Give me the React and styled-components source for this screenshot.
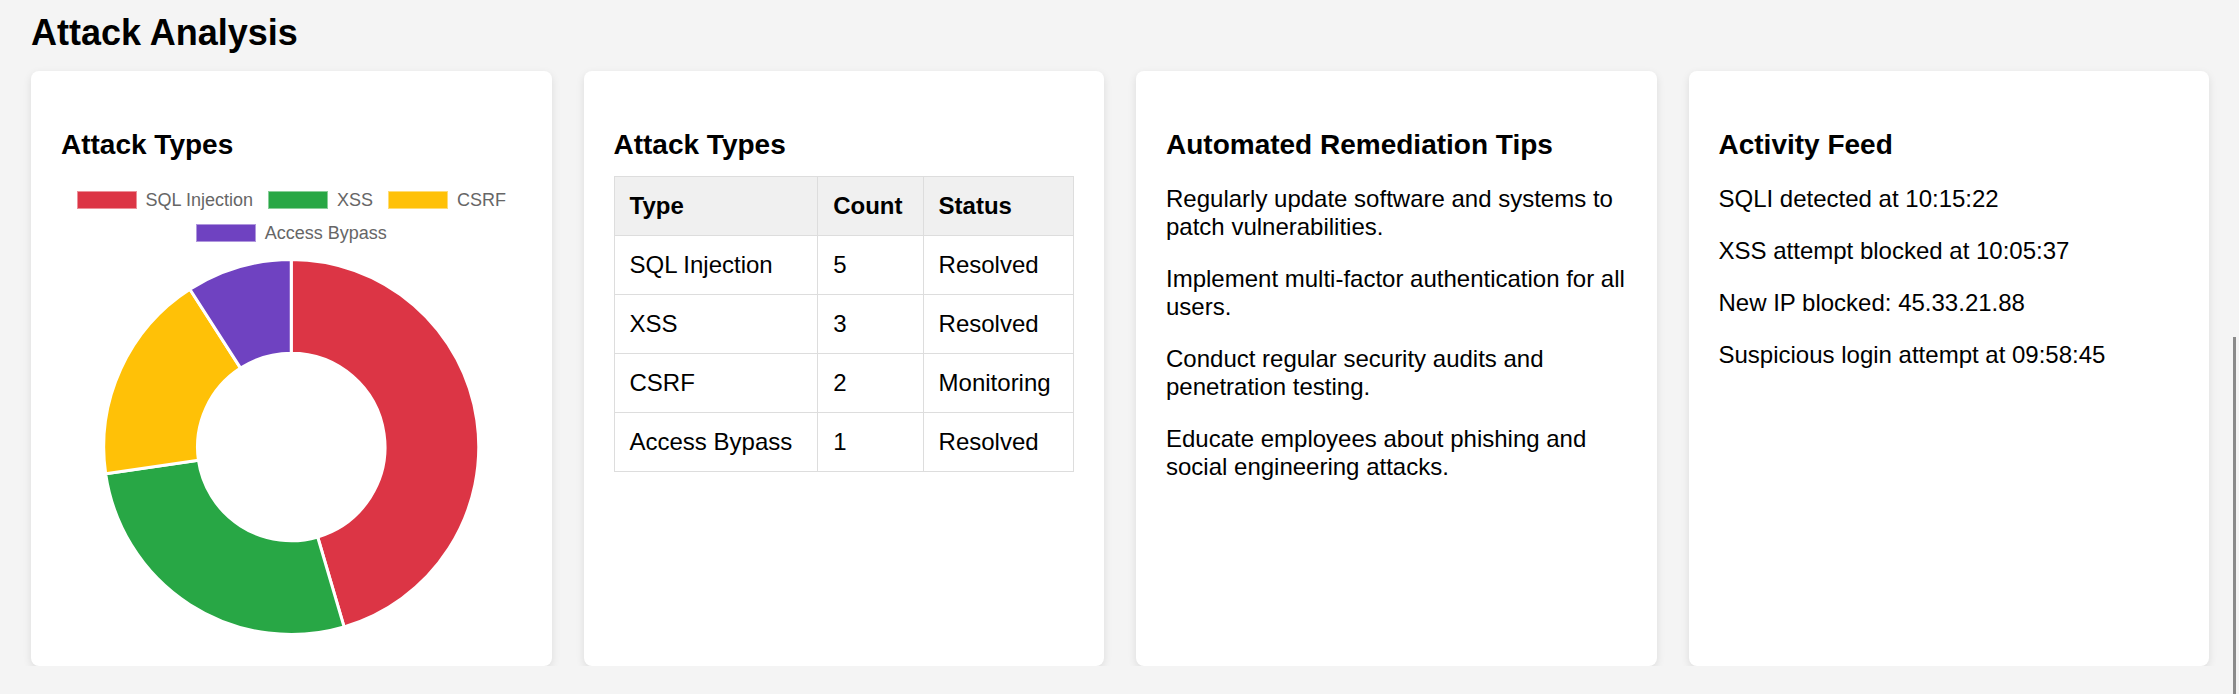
import React from "react";
import styled, { createGlobalStyle } from "styled-components";

const GlobalStyle = createGlobalStyle`
  html, body {
    margin: 0;
    padding: 0;
    background: #f4f4f4;
    font-family: "Liberation Sans", Arial, Helvetica, sans-serif;
    font-size: 24px;
    color: #000;
  }
`;

const Page = styled.main`
  padding: 0 30px 0 31px;
`;

const Title = styled.h2`
  font-size: 36px;
  font-weight: bold;
  margin: 12px 0 17px;
  line-height: normal;
`;

const Grid = styled.div`
  display: grid;
  grid-template-columns: repeat(4, minmax(0, 1fr));
  gap: 32px;
  align-items: stretch;
`;

const Card = styled.section`
  background: #fff;
  border-radius: 8px;
  padding: 30px;
  box-shadow: 0 3px 9px rgba(0, 0, 0, 0.1);
  min-width: 0;
`;

const CardTitle = styled.h3`
  font-size: 28px;
  font-weight: bold;
  margin: 28px 0 15px;
  line-height: normal;
`;

const Text = styled.p`
  margin: 24px 0;
  line-height: normal;
`;

const ChartBox = styled.div`
  width: 100%;
  height: 460px;
  display: flex;
  flex-direction: column;
`;

const Legend = styled.ul`
  list-style: none;
  margin: 0;
  padding: 15px 0;
  display: flex;
  flex-wrap: wrap;
  justify-content: center;
  column-gap: 15px;
  row-gap: 15px;
`;

const LegendItem = styled.li`
  display: flex;
  align-items: center;
  gap: 9px;
  height: 18px;
  font-size: 18px;
  line-height: 18px;
  color: #666;
`;

const Swatch = styled.span`
  display: inline-block;
  width: 60px;
  height: 18px;
  box-sizing: border-box;
  background: ${(p) => p.$color};
  border: 1.5px solid rgba(255, 255, 255, 0.45);
`;

const DonutSvg = styled.svg`
  flex: 1;
  width: 100%;
  min-height: 0;
  display: block;
`;

const Table = styled.table`
  width: 100%;
  border-collapse: collapse;
  font-size: 24px;
`;

const Th = styled.th`
  text-align: left;
  padding: 15px;
  border: 1px solid #ddd;
  background: #f0f0f0;
  font-weight: bold;
  line-height: normal;
`;

const Td = styled.td`
  text-align: left;
  padding: 15px;
  border: 1px solid #ddd;
  line-height: normal;
`;

const ScrollThumb = styled.div`
  position: fixed;
  right: 3px;
  top: 337px;
  bottom: 0;
  width: 3px;
  background: #8a8a8a;
`;

const attacks = [
  { type: "SQL Injection", count: 5, status: "Resolved", color: "#dc3545" },
  { type: "XSS", count: 3, status: "Resolved", color: "#28a745" },
  { type: "CSRF", count: 2, status: "Monitoring", color: "#ffc107" },
  { type: "Access Bypass", count: 1, status: "Resolved", color: "#6f42c1" },
];

const tips = [
  "Regularly update software and systems to patch vulnerabilities.",
  "Implement multi-factor authentication for all users.",
  "Conduct regular security audits and penetration testing.",
  "Educate employees about phishing and social engineering attacks.",
];

const feed = [
  "SQLI detected at 10:15:22",
  "XSS attempt blocked at 10:05:37",
  "New IP blocked: 45.33.21.88",
  "Suspicious login attempt at 09:58:45",
];

function arcPath(cx, cy, r1, r2, a0, a1) {
  const p = (r, a) => [cx + r * Math.cos(a), cy + r * Math.sin(a)];
  const [x0, y0] = p(r2, a0);
  const [x1, y1] = p(r2, a1);
  const [x2, y2] = p(r1, a1);
  const [x3, y3] = p(r1, a0);
  const large = a1 - a0 > Math.PI ? 1 : 0;
  return `M${x0} ${y0} A${r2} ${r2} 0 ${large} 1 ${x1} ${y1} L${x2} ${y2} A${r1} ${r1} 0 ${large} 0 ${x3} ${y3} Z`;
}

function Donut() {
  const total = attacks.reduce((s, a) => s + a.count, 0);
  const cx = 230;
  const cy = 190;
  const R = 187.5;
  const r = 93.75;
  let angle = -Math.PI / 2;
  const segs = attacks.map((a) => {
    const start = angle;
    const end = angle + (a.count / total) * Math.PI * 2;
    angle = end;
    return { ...a, d: arcPath(cx, cy, r, R, start, end) };
  });
  return (
    <DonutSvg viewBox="0 0 460 379" preserveAspectRatio="xMidYMid meet">
      {segs.map((s) => (
        <path key={s.type} d={s.d} fill={s.color} stroke="#fff" strokeWidth="3" strokeLinejoin="miter" />
      ))}
    </DonutSvg>
  );
}

export default function App() {
  return (
    <>
      <GlobalStyle />
      <Page>
        <Title>Attack Analysis</Title>
        <Grid>
          <Card>
            <CardTitle>Attack Types</CardTitle>
            <ChartBox>
              <Legend>
                {attacks.map((a) => (
                  <LegendItem key={a.type}>
                    <Swatch $color={a.color} />
                    {a.type}
                  </LegendItem>
                ))}
              </Legend>
              <Donut />
            </ChartBox>
          </Card>
          <Card>
            <CardTitle>Attack Types</CardTitle>
            <Table>
              <thead>
                <tr>
                  <Th>Type</Th>
                  <Th>Count</Th>
                  <Th>Status</Th>
                </tr>
              </thead>
              <tbody>
                {attacks.map((a) => (
                  <tr key={a.type}>
                    <Td>{a.type}</Td>
                    <Td>{a.count}</Td>
                    <Td>{a.status}</Td>
                  </tr>
                ))}
              </tbody>
            </Table>
          </Card>
          <Card>
            <CardTitle>Automated Remediation Tips</CardTitle>
            {tips.map((t) => (
              <Text key={t}>{t}</Text>
            ))}
          </Card>
          <Card>
            <CardTitle>Activity Feed</CardTitle>
            {feed.map((f) => (
              <Text key={f}>{f}</Text>
            ))}
          </Card>
        </Grid>
      </Page>
      <ScrollThumb />
    </>
  );
}
